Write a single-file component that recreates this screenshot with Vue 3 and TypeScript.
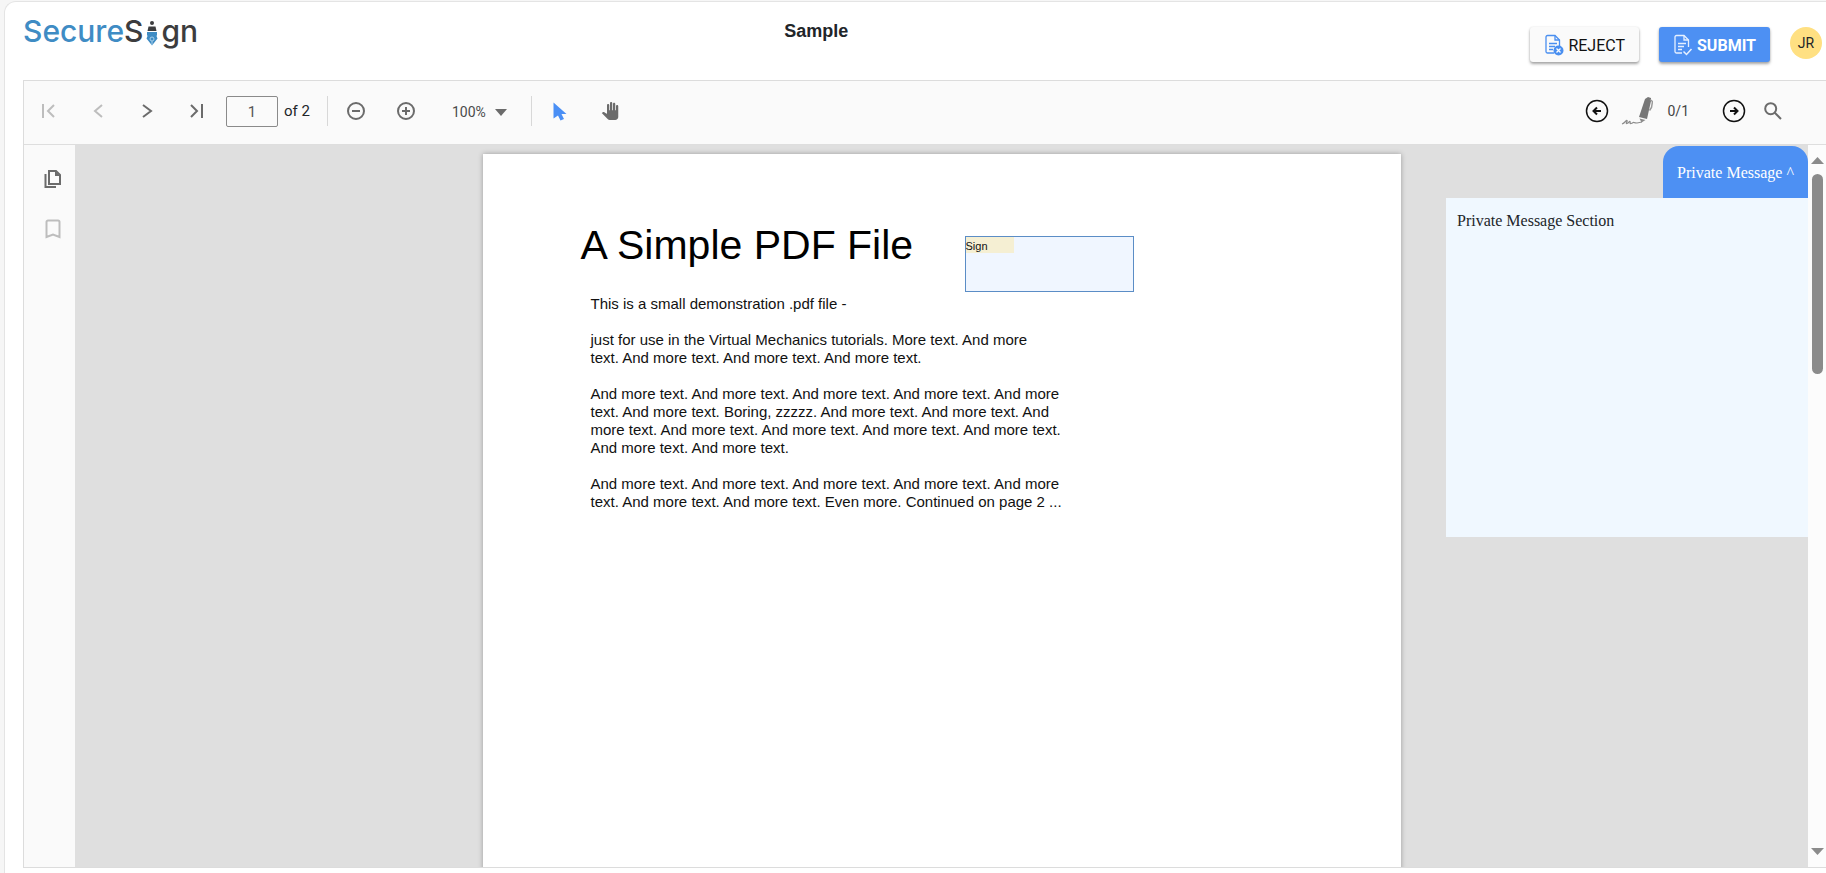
<script setup lang="ts">
import { ref } from 'vue'

const pageNumber = ref('1')
const messageOpen = ref(true)

const paragraphs: string[][] = [
  ['This is a small demonstration .pdf file -'],
  [
    'just for use in the Virtual Mechanics tutorials. More text. And more',
    'text. And more text. And more text. And more text.',
  ],
  [
    'And more text. And more text. And more text. And more text. And more',
    'text. And more text. Boring, zzzzz. And more text. And more text. And',
    'more text. And more text. And more text. And more text. And more text.',
    'And more text. And more text.',
  ],
  [
    'And more text. And more text. And more text. And more text. And more',
    'text. And more text. And more text. Even more. Continued on page 2 ...',
  ],
]
</script>

<template>
  <div class="shell">
    <header class="header">
      <a class="logo" href="#" aria-label="SecureSign">
        <span class="logo-blue">Secure</span><span>S</span>
        <svg class="nib" width="12" height="26" viewBox="0 0 12 26" aria-hidden="true">
          <circle cx="6" cy="3" r="2" fill="#3c3c3e" />
          <path d="M2.500 6.500h7l1 4.500h-9z" fill="#3c3c3e" />
          <path d="M1 12h10v3l-.5 1 1 2.500L6 25.500 .5 18.500l1-2.500-.5-1z" fill="#3f8cc4" />
          <path d="M6 25v-4" stroke="#a8d0ec" stroke-width="1" />
          <circle cx="6" cy="19" r="2" fill="none" stroke="#a8d0ec" stroke-width="1" />
        </svg>
        <span>gn</span>
      </a>
      <h1 class="title">Sample</h1>
      <div class="actions">
        <button class="btn reject" type="button">
          <svg width="20" height="22" viewBox="0 0 20 22" fill="none" stroke="#4a8ff0" stroke-width="1.300" aria-hidden="true">
            <path d="M10 19H3.500A1.500 1.500 0 0 1 2 17.500V3a1.500 1.500 0 0 1 1.500-1.500H11L15.500 6v6" />
            <path d="M11 1.500V6h4.500M5 9.500h8M5 12.500h6M5 15.500h4" />
            <circle cx="14.500" cy="16.500" r="5" fill="#4a8ff0" stroke="none" />
            <path d="M12.500 14.500l4 4m0-4l-4 4" stroke="#fff" />
          </svg>
          <span>REJECT</span>
        </button>
        <button class="btn submit" type="button">
          <svg width="20" height="22" viewBox="0 0 20 22" fill="none" stroke="#e6f0ff" stroke-width="1.300" aria-hidden="true">
            <path d="M9 19H3.500A1.500 1.500 0 0 1 2 17.500V3a1.500 1.500 0 0 1 1.500-1.500H11L15.500 6v7" />
            <path d="M11 1.500V6h4.500M5 9.500h8M5 12.500h6M5 15.500h4" />
            <path d="M10.500 17.500l3 3 5-5.500" stroke-width="1.500" />
          </svg>
          <span>SUBMIT</span>
        </button>
        <span class="avatar">JR</span>
      </div>
    </header>

    <main class="viewer">
      <div class="toolbar">
        <div class="group">
          <button class="tool faded" type="button" aria-label="First page">
            <svg width="16" height="16" viewBox="0 0 16 16"><path d="M3 1v14M14 2L8 8l6 6" /></svg>
          </button>
          <button class="tool faded" type="button" aria-label="Previous page">
            <svg width="16" height="16" viewBox="0 0 16 16"><path d="M12 2L5 8l7 6" /></svg>
          </button>
          <button class="tool" type="button" aria-label="Next page">
            <svg width="16" height="16" viewBox="0 0 16 16"><path d="M3 2l8 6-8 6" /></svg>
          </button>
          <button class="tool" type="button" aria-label="Last page">
            <svg width="16" height="16" viewBox="0 0 16 16"><path d="M1 2l6 6-6 6M12 1v14" /></svg>
          </button>
        </div>
        <label class="pager">
          <input v-model="pageNumber" type="text" aria-label="Page number" />
          <span>of 2</span>
        </label>
        <span class="rule"></span>
        <div class="group">
          <button class="tool" type="button" aria-label="Zoom out">
            <svg width="18" height="18" viewBox="0 0 18 18"><circle cx="9" cy="9" r="8" /><path d="M5 9h8" /></svg>
          </button>
          <button class="tool" type="button" aria-label="Zoom in">
            <svg width="18" height="18" viewBox="0 0 18 18"><circle cx="9" cy="9" r="8" /><path d="M5 9h8M9 5v8" /></svg>
          </button>
        </div>
        <button class="zoom" type="button">
          <span>100%</span>
          <svg width="12" height="7" viewBox="0 0 12 7" aria-hidden="true"><path d="M0 0h12L6 7z" fill="#6b6b6b" /></svg>
        </button>
        <span class="rule"></span>
        <div class="group">
          <button class="tool" type="button" aria-label="Select text">
            <svg width="14" height="19" viewBox="0 0 14 19"><path class="solid blue" d="M0.500 0.500L13.500 12H8.500l2.500 5-3.500 1.500L5 13.500 0.500 16.500z" /></svg>
          </button>
          <button class="tool" type="button" aria-label="Pan">
            <svg width="18" height="18" viewBox="0 0 24 24"><path class="solid" d="M23 5.500V20c0 2.200-1.800 4-4 4h-7.300c-1.080 0-2.100-.430-2.850-1.190L1 14.830s1.260-1.230 1.300-1.250c.220-.190.490-.290.790-.290.220 0 .420.060.600.160.040.010 4.310 2.460 4.310 2.460V4c0-.830.670-1.500 1.500-1.500S11 3.170 11 4v7h1V1.500c0-.830.670-1.500 1.500-1.500S15 .670 15 1.500V11h1V2.500c0-.830.670-1.500 1.500-1.500s1.500.670 1.500 1.500V11h1V5.500c0-.830.670-1.500 1.500-1.500s1.500.670 1.500 1.500z" /></svg>
          </button>
        </div>

        <div class="fields">
          <button class="tool dark" type="button" aria-label="Previous field">
            <svg width="24" height="24" viewBox="0 0 24 24"><circle cx="12" cy="12" r="10.500" /><path d="M16 12H9M12 8.500L8.500 12l3.500 3.500" /></svg>
          </button>
          <svg class="pen" width="32" height="30" viewBox="0 0 32 30" aria-hidden="true">
            <path d="M24 3l3-2 3 1v3l-4 18-8-2z" fill="#777" />
            <path d="M29 3.500l2.500 2-1 6-2 3" fill="none" stroke="#999" stroke-width="1.500" />
            <path d="M18.500 22.500l6 1.500-4 2.500z" fill="#8b8b8b" />
            <path d="M1 28c3-1 4-4 5-3.500s-2 3.500 0 3 2-2.500 3-2-1 2.500 1 2 2-1.500 3-1 2 .5 3 .5l5-1" fill="none" stroke="#8b8b8b" stroke-width="1.200" />
          </svg>
          <span class="count">0/1</span>
          <button class="tool dark" type="button" aria-label="Next field">
            <svg width="24" height="24" viewBox="0 0 24 24"><circle cx="12" cy="12" r="10.500" /><path d="M8 12h7M12 8.500l3.500 3.500-3.500 3.500" /></svg>
          </button>
          <button class="tool search" type="button" aria-label="Search">
            <svg width="18" height="18" viewBox="0 0 18 18"><circle cx="6.700" cy="6.700" r="5.500" /><path d="M10.800 10.800L17 17" /></svg>
          </button>
        </div>
      </div>

      <div class="body">
        <nav class="rail" aria-label="Panels">
          <button class="tool" type="button" aria-label="Page thumbnails">
            <svg width="18" height="20" viewBox="0 0 18 20"><path d="M5 2h7l4 4v9H5z" /><path d="M1.500 5v13H12" /><path class="solid" d="M11 1.500V7h5z" /></svg>
          </button>
          <button class="tool faded" type="button" aria-label="Bookmarks">
            <svg width="16" height="20" viewBox="0 0 16 20"><path d="M1.500 18V3A1.500 1.500 0 0 1 3 1.500h10A1.500 1.500 0 0 1 14.500 3v15L8 15.500z" /></svg>
          </button>
        </nav>

        <section class="stage">
          <article class="page">
            <h2>A Simple PDF File</h2>
            <p v-for="(lines, i) in paragraphs" :key="i">
              <span v-for="(line, j) in lines" :key="j">{{ line }}</span>
            </p>
            <button class="sign-field" type="button"><span>Sign</span></button>
          </article>

          <aside class="message">
            <button class="message-tab" type="button" :aria-expanded="messageOpen" @click="messageOpen = !messageOpen">
              Private Message ^
            </button>
            <div v-if="messageOpen" class="message-body">Private Message Section</div>
          </aside>
        </section>

        <div class="scrollbar" aria-hidden="true">
          <svg width="13" height="7" viewBox="0 0 13 7"><path d="M0 7h13L6.500 0z" fill="#8b8b8b" /></svg>
          <div class="track"><div class="thumb"></div></div>
          <svg width="13" height="7" viewBox="0 0 13 7"><path d="M0 0h13L6.500 7z" fill="#8b8b8b" /></svg>
        </div>
      </div>
    </main>
  </div>
</template>

<style>
body {
  background: #f6f6f6;
  overflow: hidden;
}
</style>

<style scoped>
* {
  box-sizing: border-box;
}

.shell {
  display: flex;
  flex-direction: column;
  height: calc(100vh - 1px);
  margin: 1px 0 0 4px;
  padding: 0 0 5px 18px;
  background: #fff;
  border: solid #e4e4e4;
  border-width: 1px 0 0 1px;
  border-radius: 12px 0 0 0;
  font-family: Roboto, "Liberation Sans", sans-serif;
  color: #212529;
}

button {
  margin: 0;
  padding: 0;
  border: 0;
  background: none;
  color: inherit;
  font: inherit;
  cursor: pointer;
}

.header {
  display: grid;
  grid-template-columns: 33fr 22fr 45fr;
  flex: none;
  height: 78px;
}

.logo {
  display: flex;
  align-items: flex-start;
  height: 50px;
  padding-top: 10px;
  color: #3c3c3e;
  text-decoration: none;
  font: 500 30px/38px Inter, sans-serif;
}

.logo-blue {
  color: #3f8cc4;
}

.nib {
  margin: 8px 3px 0;
}

.title {
  margin: 0;
  padding-top: 18px;
  text-align: center;
  font: bold 18px/22px "Liberation Sans", sans-serif;
}

.actions {
  display: flex;
  justify-content: flex-end;
  align-items: flex-start;
  gap: 20px;
  padding: 25px 4px 0 0;
}

.btn {
  display: flex;
  align-items: center;
  gap: 4px;
  height: 35px;
  padding: 1px 14px 0 14px;
  border-radius: 3px;
  box-shadow: 0 2px 3px rgba(0, 0, 0, 0.35), 0 0 2px rgba(0, 0, 0, 0.1);
  font-size: 16px;
}

.reject {
  background: #fafafa;
  font-weight: 400;
  color: #111;
}

.submit {
  background: #4d90f3;
  color: #fff;
  font-weight: 700;
}

.avatar {
  display: grid;
  place-items: center;
  width: 32px;
  height: 32px;
  border-radius: 50%;
  background: #ffe082;
  font-size: 14px;
}

.viewer {
  display: flex;
  flex-direction: column;
  flex: 1;
  min-height: 0;
  border: 1px solid #dcdcdc;
  border-right: 0;
}

.toolbar {
  display: flex;
  align-items: center;
  flex: none;
  height: 64px;
  padding: 0 37px 3px 8px;
  background: #fafafa;
  border-bottom: 1px solid #dedede;
}

.group {
  display: flex;
  gap: 18px;
}

.tool {
  display: grid;
  place-items: center;
  width: 32px;
  height: 32px;
  color: #6b6b6b;
}

.tool svg {
  fill: none;
  stroke: currentColor;
  stroke-width: 2;
}

.tool .solid {
  fill: currentColor;
  stroke: none;
}

.tool .blue {
  color: #4a8ff5;
}

.faded {
  color: #bdbdbd;
}

.dark {
  color: #111;
}

.dark circle {
  stroke-width: 1.5;
}

.pager {
  display: flex;
  align-items: center;
  gap: 6px;
  margin-left: 12px;
  font-size: 15px;
}

.pager input {
  width: 52px;
  height: 31px;
  padding: 2px 0 0;
  border: 1px solid #8a8a8a;
  border-radius: 2px;
  background: #fafafa;
  color: #555;
  font: 15px/27px Roboto, sans-serif;
  text-align: center;
}

.rule {
  width: 1px;
  height: 30px;
  margin: 0 12px 0 17px;
  background: #d8d8d8;
}

.zoom {
  display: flex;
  align-items: center;
  gap: 9px;
  margin: 0 7px 0 30px;
  padding-top: 2px;
  color: #4a4a4a;
  font-size: 14px;
}

.fields {
  display: flex;
  align-items: center;
  margin-left: auto;
}

.pen {
  margin-left: 8px;
}

.count {
  margin: 0 29px 0 14px;
  color: #444;
  font-size: 14px;
}

.search {
  margin-left: 7px;
}

.body {
  display: flex;
  flex: 1;
  min-height: 0;
}

.rail {
  display: flex;
  flex-direction: column;
  align-items: center;
  gap: 18px;
  flex: none;
  width: 51px;
  padding: 18px 0 0 6px;
  background: #fafafa;
}

.stage {
  position: relative;
  display: flex;
  justify-content: center;
  flex: 1;
  min-width: 0;
  padding-top: 9px;
  background: #dfdfdf;
  overflow: hidden;
}

.page {
  position: relative;
  flex: none;
  width: 918px;
  height: 1188px;
  padding: 67px 108px;
  background: #fff;
  box-shadow: 0 0 5px rgba(0, 0, 0, 0.3);
  color: #111;
  font: 15px/18px "Liberation Sans", sans-serif;
}

.page h2 {
  margin: 0 0 26px -10px;
  color: #000;
  font-weight: 400;
  font-size: 41px;
  line-height: 48px;
}

.page p {
  margin: 0 0 18px;
}

.page p span {
  display: block;
  white-space: nowrap;
}

.sign-field {
  display: flex;
  align-items: flex-start;
  position: absolute;
  top: 82px;
  left: 482px;
  width: 169px;
  height: 56px;
  border: 1px solid #5b8dc6;
  background: #f0f6ff;
  color: #111;
  font-size: 11px;
  line-height: 18px;
  text-align: left;
}

.sign-field span {
  width: 48px;
  height: 16px;
  background: #f5efd3;
}

.message {
  position: absolute;
  top: 1px;
  right: 0;
  display: flex;
  flex-direction: column;
  align-items: flex-end;
  width: 362px;
  font: 16px/20px "Liberation Serif", serif;
}

.message-tab {
  width: 145px;
  height: 52px;
  padding-top: 2px;
  border-radius: 16px 16px 0 0;
  background: #4d90f3;
  color: #fff;
}

.message-body {
  align-self: stretch;
  height: 339px;
  padding: 13px 11px;
  background: #f0f8ff;
}

.scrollbar {
  display: flex;
  flex-direction: column;
  align-items: center;
  flex: none;
  width: 18px;
  padding: 12px 0;
  background: #fcfcfc;
}

.track {
  flex: 1;
  padding: 10px 0;
}

.thumb {
  width: 11px;
  height: 200px;
  border-radius: 6px;
  background: #8b8b8b;
}
</style>
